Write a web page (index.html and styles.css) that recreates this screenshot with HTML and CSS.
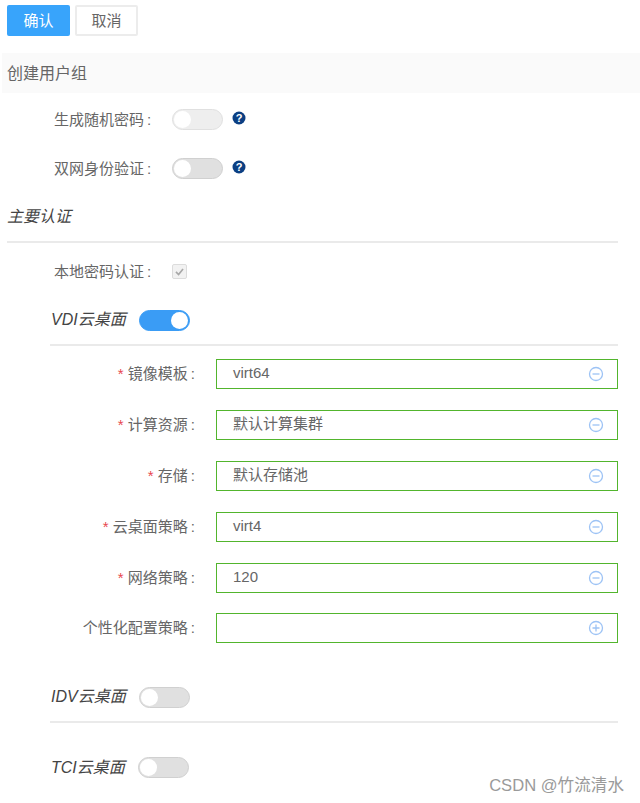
FILE: index.html
```html
<html>

<head>
    <meta charset="utf-8">
    <link rel="stylesheet" href="styles.css">
</head>

<body>
    <div class="toolbar">
        <button class="btn btn--primary">确认</button>
        <button class="btn">取消</button>
    </div>

    <div class="page-title">创建用户组</div>

    <div class="top-row">
        <span class="top-row__label">生成随机密码&#8201;:</span>
        <span class="switch switch--light"></span>
        <svg class="help" viewBox="0 0 14 14"><circle cx="7" cy="7" r="6.5" fill="#0b3f83"/><text x="7" y="10.8" text-anchor="middle" class="help__mark">?</text></svg>
    </div>
    <div class="top-row top-row--second">
        <span class="top-row__label">双网身份验证&#8201;:</span>
        <span class="switch"></span>
        <svg class="help" viewBox="0 0 14 14"><circle cx="7" cy="7" r="6.5" fill="#0b3f83"/><text x="7" y="10.8" text-anchor="middle" class="help__mark">?</text></svg>
    </div>

    <div class="section-title">主要认证</div>

    <div class="top-row top-row--check">
        <span class="top-row__label">本地密码认证&#8201;:</span>
        <span class="check">
            <svg viewBox="0 0 14 14"><path d="M3.2 7.4 L6 10.2 L10.8 4.2" fill="none" stroke="#a8a8a8" stroke-width="1.8"/></svg>
        </span>
    </div>

    <div class="desktop">
        <div class="desktop__head">
            <span class="desktop__name">VDI云桌面</span>
            <span class="switch switch--on"></span>
        </div>

        <div class="fields">
            <div class="field">
                <label class="field__label"><i>*</i> 镜像模板&#8201;:</label>
                <div class="field__box">virt64
                    <svg class="field__icon" viewBox="0 0 16 16"><circle cx="8" cy="8" r="6.5"/><path d="M4.5 8 H11.5"/></svg>
                </div>
            </div>
            <div class="field">
                <label class="field__label"><i>*</i> 计算资源&#8201;:</label>
                <div class="field__box">默认计算集群
                    <svg class="field__icon" viewBox="0 0 16 16"><circle cx="8" cy="8" r="6.5"/><path d="M4.5 8 H11.5"/></svg>
                </div>
            </div>
            <div class="field">
                <label class="field__label"><i>*</i> 存储&#8201;:</label>
                <div class="field__box">默认存储池
                    <svg class="field__icon" viewBox="0 0 16 16"><circle cx="8" cy="8" r="6.5"/><path d="M4.5 8 H11.5"/></svg>
                </div>
            </div>
            <div class="field">
                <label class="field__label"><i>*</i> 云桌面策略&#8201;:</label>
                <div class="field__box">virt4
                    <svg class="field__icon" viewBox="0 0 16 16"><circle cx="8" cy="8" r="6.5"/><path d="M4.5 8 H11.5"/></svg>
                </div>
            </div>
            <div class="field">
                <label class="field__label"><i>*</i> 网络策略&#8201;:</label>
                <div class="field__box">120
                    <svg class="field__icon" viewBox="0 0 16 16"><circle cx="8" cy="8" r="6.5"/><path d="M4.5 8 H11.5"/></svg>
                </div>
            </div>
            <div class="field field--last">
                <label class="field__label">个性化配置策略&#8201;:</label>
                <div class="field__box">
                    <svg class="field__icon" viewBox="0 0 16 16"><circle cx="8" cy="8" r="6.5"/><path d="M4.5 8 H11.5 M8 4.5 V11.5"/></svg>
                </div>
            </div>
        </div>
    </div>

    <div class="desktop desktop--idv">
        <div class="desktop__head">
            <span class="desktop__name">IDV云桌面</span>
            <span class="switch"></span>
        </div>
    </div>

    <div class="desktop desktop--tci">
        <div class="desktop__name-row">
            <span class="desktop__name">TCI云桌面</span>
            <span class="switch"></span>
        </div>
    </div>

    <div class="watermark">CSDN @竹流清水</div>
</body>

</html>
```

FILE: styles.css
```css
* {
    box-sizing: border-box;
}

html,
body {
    margin: 0;
    height: 803px;
    overflow: hidden;
    background: #fff;
}

body {
    position: relative;
    font-family: "Liberation Sans", "Noto Sans CJK SC", sans-serif;
    font-size: 15px;
    color: #666;
}

.toolbar {
    display: flex;
    gap: 5px;
    padding: 5px 0 0 7px;
}

.btn {
    width: 63px;
    height: 31px;
    padding: 0 0 2px;
    border: 2px solid #ececec;
    border-radius: 2px;
    background: #fff;
    color: #666;
    font: inherit;
}

.btn--primary {
    border-color: #38a4fb;
    background: #38a4fb;
    color: #fff;
}

.page-title {
    height: 40px;
    margin: 17px 0 0 2px;
    padding-left: 5px;
    background: #fafafa;
    color: #666;
    font-size: 16px;
    line-height: 41px;
}

.top-row {
    display: flex;
    align-items: center;
    height: 20px;
    margin-top: 16px;
    padding-left: 54px;
}

.top-row--second {
    margin-top: 29px;
}

.top-row--check {
    margin-top: 18px;
}

.top-row__label {
    width: 118px;
    padding-bottom: 2px;
    white-space: nowrap;
}

.switch {
    position: relative;
    display: block;
    flex: none;
    width: 51px;
    height: 21px;
    border: 1px solid #d0d0d0;
    border-radius: 11px;
    background: #e0e0e0;
}

.switch::after {
    content: "";
    position: absolute;
    top: 1px;
    left: 1px;
    width: 17px;
    height: 17px;
    border-radius: 50%;
    background: #fff;
}

.switch--light {
    background: #eee;
    border-color: #e0e0e0;
}

.switch--on {
    border-color: #3a9cf5;
    background: #3a9cf5;
}

.switch--on::after {
    left: auto;
    right: 1px;
}

.help {
    width: 14px;
    height: 14px;
    margin: -2px 0 0 9px;
}

.help__mark {
    fill: #fff;
    font-size: 11px;
    font-weight: bold;
}

.section-title {
    height: 36px;
    margin: 29px 22px 0 7px;
    border-bottom: 2px solid #eaeaea;
    color: #444;
    font-size: 16px;
    font-style: italic;
    line-height: 19px;
}

.check {
    display: block;
    width: 15px;
    height: 15px;
    border: 1px solid #dcdcdc;
    border-radius: 2px;
    background: #f2f2f2;
}

.check svg {
    display: block;
    width: 13px;
    height: 13px;
}

.desktop {
    margin: 29px 22px 0 50px;
}

.desktop__head {
    display: flex;
    align-items: flex-start;
    gap: 11px;
    height: 36px;
    padding: 0 0 13px 1px;
    border-bottom: 2px solid #eaeaea;
}

.desktop__name-row {
    display: flex;
    align-items: center;
    gap: 10px;
    height: 21px;
    padding-left: 1px;
}

.desktop__name {
    width: 77px;
    color: #444;
    font-size: 16px;
    font-style: italic;
    line-height: 19px;
    white-space: nowrap;
}

.fields {
    display: flex;
    flex-direction: column;
    gap: 21px;
    margin-top: 13px;
}

.field {
    display: flex;
    align-items: center;
}

.field--last {
    margin-top: -1px;
}

.field__label {
    width: 145px;
    padding-bottom: 3px;
    text-align: right;
    white-space: nowrap;
}

.field__label i {
    color: #e8484f;
    font-style: normal;
}

.field__box {
    position: relative;
    flex: 1;
    height: 30px;
    margin-left: 21px;
    padding-left: 16px;
    border: 1px solid #52b52d;
    line-height: 26px;
    color: #666;
}

.field__icon {
    position: absolute;
    top: 6px;
    right: 13px;
    width: 16px;
    height: 16px;
    fill: none;
    stroke: #9dc3f5;
    stroke-width: 1.3;
}

.desktop--idv {
    margin-top: 44px;
}

.desktop--tci {
    margin-top: 34px;
}

.watermark {
    position: absolute;
    top: 772px;
    right: 16px;
    color: #9a9a9a;
    font-size: 16.6px;
    white-space: nowrap;
}
```
